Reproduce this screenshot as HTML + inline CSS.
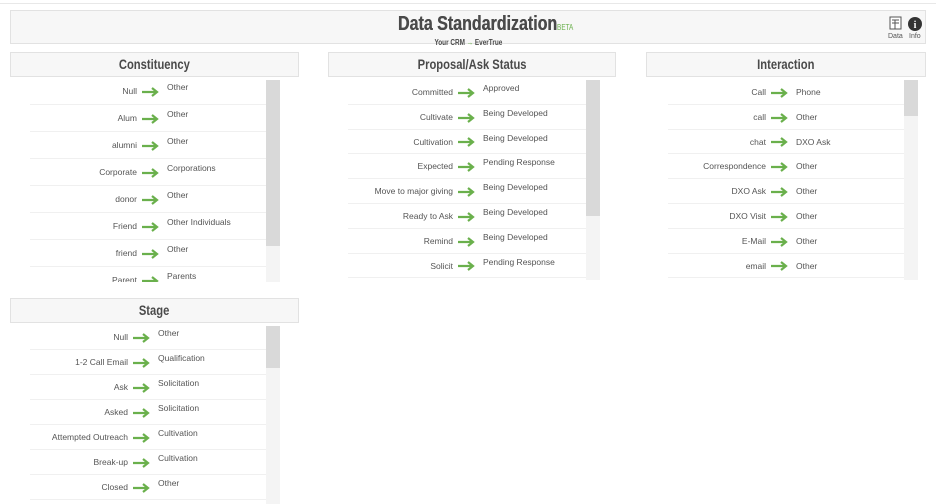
<!DOCTYPE html>
<html><head><style>
body{margin:0;width:936px;height:504px;background:#fff;font-family:"Liberation Sans",sans-serif;position:relative;overflow:hidden}
.top{position:absolute;left:0;top:0;width:936px;height:3px;border-bottom:1px solid #e8e8e8}
.hd{position:absolute;background:#f7f7f7;border:1px solid #e2e2e2;box-sizing:border-box;text-align:center;color:#4a4a4a;font-weight:bold;font-size:14px;line-height:23px}
.hd>span{display:inline-block;transform:scaleX(.8)}
.box{position:absolute;overflow:hidden}
.r{height:var(--h);line-height:var(--h);border-bottom:1px solid #f0f0f0;font-size:8.5px;color:#555;white-space:nowrap;box-sizing:border-box}
.s{display:inline-block;text-align:right;width:var(--w)}
.a{display:inline-block;width:18px;margin:0 8px 0 4px;vertical-align:middle;height:10px}
.t{position:relative;top:-4px}
.sb{position:absolute;background:#f4f4f4}
.th{position:absolute;left:0;right:0;background:#d9d9d9}
</style></head><body>
<div class="top"></div>
<div class="hd" style="left:10px;top:10px;width:916px;height:34px;line-height:normal">
<div style="margin-top:3px;line-height:20px"><span style="display:inline-block;transform:scaleX(.8);font-size:20px;margin-left:36px;text-shadow:0.4px 0 0 #4a4a4a">Data Standardization<span style="font-size:8px;color:#6ab04c;font-weight:normal;text-shadow:none">BETA</span></span></div>
<div style="font-size:8px;line-height:9px"><span style="display:inline-block;transform:scaleX(.8)">Your CRM <span style="color:#6ab04c">→</span> EverTrue</span></div>
</div>
<svg style="position:absolute;left:888px;top:16px" width="40" height="24"><rect x="2" y="1" width="11" height="12" fill="#fff" stroke="#555"/><path d="M4 4h7M4 7h7M7 4v9" stroke="#555"/><circle cx="27" cy="8" r="7" fill="#333"/><text x="27" y="12" fill="#fff" font-size="10" font-weight="bold" text-anchor="middle" font-family="Liberation Serif">i</text><text x="0" y="22" font-size="7" fill="#555" font-family="Liberation Sans">Data</text><text x="21" y="22" font-size="7" fill="#555" font-family="Liberation Sans">Info</text></svg>

<svg width="0" height="0" style="position:absolute"><defs><symbol id="ar" viewBox="0 0 18 10"><path d="M1 5h14M11 1l5 4-5 4" stroke="#6ab04c" stroke-width="2.2" fill="none"/></symbol></defs></svg>

<div class="hd" style="left:10px;top:52px;width:289px;height:25px"><span>Constituency</span></div>
<div class="hd" style="left:328px;top:52px;width:288px;height:25px"><span>Proposal/Ask Status</span></div>
<div class="hd" style="left:646px;top:52px;width:280px;height:25px"><span>Interaction</span></div>
<div class="hd" style="left:10px;top:298px;width:289px;height:25px"><span>Stage</span></div>

<div class="box" style="left:30px;top:78px;width:236px;height:204px;--h:27px;--w:107px">
<div class="r"><span class="s">Null</span><svg class="a"><use href="#ar"/></svg><span class="t">Other</span></div>
<div class="r"><span class="s">Alum</span><svg class="a"><use href="#ar"/></svg><span class="t">Other</span></div>
<div class="r"><span class="s">alumni</span><svg class="a"><use href="#ar"/></svg><span class="t">Other</span></div>
<div class="r"><span class="s">Corporate</span><svg class="a"><use href="#ar"/></svg><span class="t">Corporations</span></div>
<div class="r"><span class="s">donor</span><svg class="a"><use href="#ar"/></svg><span class="t">Other</span></div>
<div class="r"><span class="s">Friend</span><svg class="a"><use href="#ar"/></svg><span class="t">Other Individuals</span></div>
<div class="r"><span class="s">friend</span><svg class="a"><use href="#ar"/></svg><span class="t">Other</span></div>
<div class="r"><span class="s">Parent</span><svg class="a"><use href="#ar"/></svg><span class="t">Parents</span></div>
</div>
<div class="sb" style="left:266px;top:80px;width:14px;height:202px"><div class="th" style="top:0;height:166px"></div></div>

<div class="box" style="left:348px;top:80px;width:238px;height:200px;--h:24.8px;--w:105px">
<div class="r"><span class="s">Committed</span><svg class="a"><use href="#ar"/></svg><span class="t">Approved</span></div>
<div class="r"><span class="s">Cultivate</span><svg class="a"><use href="#ar"/></svg><span class="t">Being Developed</span></div>
<div class="r"><span class="s">Cultivation</span><svg class="a"><use href="#ar"/></svg><span class="t">Being Developed</span></div>
<div class="r"><span class="s">Expected</span><svg class="a"><use href="#ar"/></svg><span class="t">Pending Response</span></div>
<div class="r"><span class="s">Move to major giving</span><svg class="a"><use href="#ar"/></svg><span class="t">Being Developed</span></div>
<div class="r"><span class="s">Ready to Ask</span><svg class="a"><use href="#ar"/></svg><span class="t">Being Developed</span></div>
<div class="r"><span class="s">Remind</span><svg class="a"><use href="#ar"/></svg><span class="t">Being Developed</span></div>
<div class="r"><span class="s">Solicit</span><svg class="a"><use href="#ar"/></svg><span class="t">Pending Response</span></div>
</div>
<div class="sb" style="left:586px;top:80px;width:14px;height:200px"><div class="th" style="top:0;height:136px"></div></div>

<div class="box" style="left:668px;top:80px;width:236px;height:200px;--h:24.8px;--w:98px">
<div class="r"><span class="s">Call</span><svg class="a"><use href="#ar"/></svg><span>Phone</span></div>
<div class="r"><span class="s">call</span><svg class="a"><use href="#ar"/></svg><span>Other</span></div>
<div class="r"><span class="s">chat</span><svg class="a"><use href="#ar"/></svg><span>DXO Ask</span></div>
<div class="r"><span class="s">Correspondence</span><svg class="a"><use href="#ar"/></svg><span>Other</span></div>
<div class="r"><span class="s">DXO Ask</span><svg class="a"><use href="#ar"/></svg><span>Other</span></div>
<div class="r"><span class="s">DXO Visit</span><svg class="a"><use href="#ar"/></svg><span>Other</span></div>
<div class="r"><span class="s">E-Mail</span><svg class="a"><use href="#ar"/></svg><span>Other</span></div>
<div class="r"><span class="s">email</span><svg class="a"><use href="#ar"/></svg><span>Other</span></div>
</div>
<div class="sb" style="left:904px;top:80px;width:14px;height:200px"><div class="th" style="top:0;height:36px"></div></div>

<div class="box" style="left:30px;top:325px;width:236px;height:179px;--h:25px;--w:98px">
<div class="r"><span class="s">Null</span><svg class="a"><use href="#ar"/></svg><span class="t">Other</span></div>
<div class="r"><span class="s">1-2 Call Email</span><svg class="a"><use href="#ar"/></svg><span class="t">Qualification</span></div>
<div class="r"><span class="s">Ask</span><svg class="a"><use href="#ar"/></svg><span class="t">Solicitation</span></div>
<div class="r"><span class="s">Asked</span><svg class="a"><use href="#ar"/></svg><span class="t">Solicitation</span></div>
<div class="r"><span class="s">Attempted Outreach</span><svg class="a"><use href="#ar"/></svg><span class="t">Cultivation</span></div>
<div class="r"><span class="s">Break-up</span><svg class="a"><use href="#ar"/></svg><span class="t">Cultivation</span></div>
<div class="r"><span class="s">Closed</span><svg class="a"><use href="#ar"/></svg><span class="t">Other</span></div>
</div>
<div class="sb" style="left:266px;top:326px;width:14px;height:178px"><div class="th" style="top:0;height:42px"></div></div>
</body></html>
